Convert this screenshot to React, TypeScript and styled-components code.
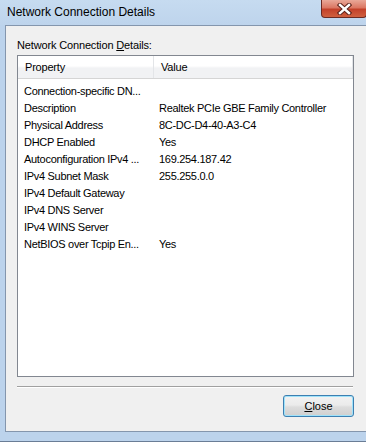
import React from 'react';
import styled, { createGlobalStyle } from 'styled-components';

const rows: [string, string][] = [
  ['Connection-specific DN...', ''],
  ['Description', 'Realtek PCIe GBE Family Controller'],
  ['Physical Address', '8C-DC-D4-40-A3-C4'],
  ['DHCP Enabled', 'Yes'],
  ['Autoconfiguration IPv4 ...', '169.254.187.42'],
  ['IPv4 Subnet Mask', '255.255.0.0'],
  ['IPv4 Default Gateway', ''],
  ['IPv4 DNS Server', ''],
  ['IPv4 WINS Server', ''],
  ['NetBIOS over Tcpip En...', 'Yes'],
];

const Global = createGlobalStyle`
  body {
    margin: 0;
    font-family: 'Liberation Sans', Arial, sans-serif;
  }
`;

export default function App() {
  return (
    <>
      <Global />
      <Window>
        <TitleBar>
          <Title>Network Connection Details</Title>
          <CloseX>
            <svg width="15" height="12" viewBox="0 0 15 12">
              <path
                d="M3 2 L12 10 M12 2 L3 10"
                stroke="#5a2119"
                strokeWidth="4.4"
                strokeLinecap="square"
              />
              <path
                d="M3 2 L12 10 M12 2 L3 10"
                stroke="#fff"
                strokeWidth="2.4"
                strokeLinecap="square"
              />
            </svg>
          </CloseX>
        </TitleBar>
        <Middle>
          <Client>
            <Label>
              Network Connection <u>D</u>etails:
            </Label>
            <List>
              <Header>
                <HeadCell width={136}>Property</HeadCell>
                <HeadCell>Value</HeadCell>
              </Header>
              <Rows>
                {rows.map(([k, v]) => (
                  <Row key={k}>
                    <Cell width={135}>{k}</Cell>
                    <Cell>{v}</Cell>
                  </Row>
                ))}
              </Rows>
            </List>
            <Separator />
            <Footer>
              <Button>
                <u>C</u>lose
              </Button>
            </Footer>
          </Client>
        </Middle>
        <BottomFrame />
      </Window>
    </>
  );
}

const Window = styled.div`
  width: 366px;
  height: 442px;
  overflow: hidden;
  display: flex;
  flex-direction: column;
  background: #bcd3ec;
`;

const TitleBar = styled.div`
  height: 25px;
  flex-shrink: 0;
  display: flex;
  align-items: flex-start;
  justify-content: space-between;
  background: linear-gradient(#c6dbf0, #bed4ec);
`;

const Title = styled.div`
  font-size: 12px;
  color: #000;
  padding: 5px 0 0 7px;
`;

const CloseX = styled.div`
  width: 46px;
  height: 18px;
  margin-right: -1px;
  border: 1px solid #6b2a22;
  border-top: none;
  border-radius: 0 0 4px 4px;
  box-sizing: border-box;
  display: flex;
  align-items: center;
  justify-content: center;
  background: linear-gradient(#e9a898 0%, #db7763 45%, #c3412a 55%, #d0603f 100%);
`;

const Middle = styled.div`
  flex: 1;
  display: flex;
  padding-left: 5px;
  min-height: 0;
`;

const Client = styled.div`
  flex: 1;
  background: #f0f0f0;
  border-top: 1px solid #8496ad;
  border-left: 1px solid #8496ad;
  border-bottom: 1px solid #8496ad;
  padding: 13px 0 0 11px;
  display: flex;
  flex-direction: column;
  overflow: hidden;

  & > * {
    flex-shrink: 0;
  }
`;

const Label = styled.div`
  font-size: 11px;
  letter-spacing: -0.15px;
  color: #000;
  height: 16px;
`;

const List = styled.div`
  width: 337px;
  height: 322px;
  box-sizing: border-box;
  border: 1px solid #828790;
  background: #fff;
  display: flex;
  flex-direction: column;
`;

const Header = styled.div`
  height: 22px;
  display: flex;
  background: linear-gradient(#ffffff 0%, #ffffff 45%, #f1f2f4 55%, #f1f2f4 100%);
  border-bottom: 1px solid #d5d5d5;
`;

const HeadCell = styled.div<{ width?: number }>`
  ${(p) => (p.width ? `width: ${p.width}px;` : 'flex: 1;')}
  box-sizing: border-box;
  padding-left: 7px;
  display: flex;
  align-items: center;
  font-size: 11px;
  letter-spacing: -0.2px;
  color: #000;
  border-right: 1px solid #e3e5e8;
`;

const Rows = styled.div`
  padding-top: 3px;
  display: flex;
  flex-direction: column;
`;

const Row = styled.div`
  height: 17px;
  display: flex;
  align-items: center;
  font-size: 11px;
  letter-spacing: -0.3px;
  color: #000;
`;

const Cell = styled.div<{ width?: number }>`
  ${(p) => (p.width ? `width: ${p.width}px;` : 'flex: 1;')}
  box-sizing: border-box;
  padding-left: 6px;
  white-space: nowrap;
`;

const Separator = styled.div`
  margin-top: 9px;
  width: 336px;
  height: 0;
  border-top: 1px solid #a0a0a0;
  border-bottom: 1px solid #fff;
`;

const Footer = styled.div`
  display: flex;
  justify-content: flex-end;
  width: 337px;
  margin-top: 7px;
`;

const Button = styled.button`
  width: 71px;
  height: 22px;
  box-sizing: border-box;
  border: 1px solid #3c7fb1;
  border-radius: 3px;
  box-shadow: inset 0 0 0 1px #9fe2fa;
  background: linear-gradient(#f2f2f2 0%, #ebebeb 45%, #dddddd 55%, #cfcfcf 100%);
  font-family: 'Liberation Sans', Arial, sans-serif;
  font-size: 11px;
  color: #000;
  padding: 0;
`;

const BottomFrame = styled.div`
  height: 10px;
  flex-shrink: 0;
  border-bottom: 1px solid #6a7d96;
  box-sizing: border-box;
`;
